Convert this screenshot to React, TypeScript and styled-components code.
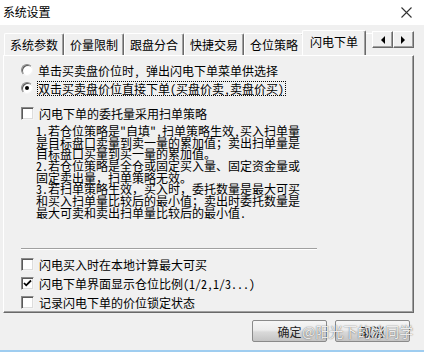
import React from "react";
import styled, { createGlobalStyle } from "styled-components";

const FONT = `"Noto Sans Mono CJK SC", "Noto Sans CJK SC", "Liberation Sans", sans-serif`;

const Global = createGlobalStyle`
  html, body { margin: 0; padding: 0; background: #f0f0f0; }
  body { width: 424px; height: 352px; overflow: hidden; font-family: ${FONT}; font-size: 12px; color: #000; }
  * { box-sizing: border-box; }
`;

const Window = styled.div`
  position: relative;
  width: 424px;
  height: 352px;
  display: flex;
  flex-direction: column;
  background: #f0f0f0;
  border-bottom: 2px solid #9fcdf0;
`;

const TitleBar = styled.div`
  height: 25px;
  flex: none;
  background: #ffffff;
  display: flex;
  align-items: center;
  justify-content: space-between;
  padding: 0 12px 1px 3px;
`;

const Title = styled.span`
  font-size: 12px;
  line-height: 12px;
  letter-spacing: -0.2px;
`;

const Body = styled.div`
  flex: 1;
  display: flex;
  flex-direction: column;
  padding: 0 10px 0 3px;
`;

const TabStrip = styled.div`
  width: 411px;
  height: 30px;
  display: flex;
  align-items: flex-end;
  position: relative;
  z-index: 1;
`;

const TabList = styled.div`
  flex: 1 1 0;
  min-width: 0;
  height: 30px;
  display: flex;
  align-items: flex-end;
  overflow: hidden;
  padding-left: 1px;
`;

const Tab = styled.div<{ $active?: boolean }>`
  flex: none;
  width: ${(p) => (p.$active ? 64 : 60)}px;
  height: ${(p) => (p.$active ? 26 : 22)}px;
  margin: 0 ${(p) => (p.$active ? -2 : 0)}px ${(p) => (p.$active ? -1 : 0)}px;
  position: relative;
  z-index: ${(p) => (p.$active ? 2 : 1)};
  display: flex;
  align-items: center;
  justify-content: center;
  padding-bottom: ${(p) => (p.$active ? 3 : 0)}px;
  background: #f0f0f0;
  border-top: 1px solid #ffffff;
  border-left: 1px solid #ffffff;
  border-right: 1px solid #696969;
  border-radius: 2px 2px 0 0;
  box-shadow: inset -1px 0 0 #a0a0a0;
  white-space: nowrap;
  font-size: 12px;
  line-height: 12px;
`;

const Spin = styled.div`
  flex: 0 0 42px;
  width: 42px;
  align-self: flex-start;
  margin-top: 6px;
  display: flex;
`;

const SpinButton = styled.div`
  flex: 0 0 21px;
  width: 21px;
  height: 17px;
  display: flex;
  align-items: center;
  justify-content: center;
  background: #f0f0f0;
  border-top: 1px solid #ffffff;
  border-left: 1px solid #ffffff;
  border-right: 1px solid #696969;
  border-bottom: 1px solid #696969;
  box-shadow: inset -1px -1px 0 #a0a0a0;
`;

const Panel = styled.div`
  width: 411px;
  height: 258px;
  flex: none;
  border-top: 1px solid #ffffff;
  border-left: 1px solid #ffffff;
  border-right: 1px solid #696969;
  border-bottom: 1px solid #696969;
  box-shadow: inset -1px -1px 0 #a0a0a0;
  padding: 5px 0 0 17px;
  display: flex;
  flex-direction: column;
`;

const OptionRow = styled.div<{ $h?: number; $mt?: number }>`
  height: ${(p) => p.$h ?? 18}px;
  margin-top: ${(p) => p.$mt ?? 0}px;
  display: flex;
  align-items: center;
  white-space: nowrap;
`;

const Radio = styled.span<{ $on?: boolean }>`
  flex: none;
  width: 12px;
  height: 12px;
  border-radius: 50%;
  background: #fff;
  border: 1px solid;
  border-color: #8a8a8a #f4f4f4 #f4f4f4 #8a8a8a;
  box-shadow: inset 1px 1px 0 #5a5a5a;
  display: flex;
  align-items: center;
  justify-content: center;
  &::after {
    content: "";
    width: 4px;
    height: 4px;
    border-radius: 50%;
    background: ${(p) => (p.$on ? "#000" : "transparent")};
  }
`;

const Check = styled.span`
  flex: none;
  width: 13px;
  height: 13px;
  background: #fff;
  border: 1px solid;
  border-color: #8a8a8a #f4f4f4 #f4f4f4 #8a8a8a;
  box-shadow: inset 1px 1px 0 #5a5a5a, inset -1px -1px 0 #dcdcdc;
  display: flex;
  align-items: center;
  justify-content: center;
`;

const Label = styled.span<{ $focus?: boolean }>`
  margin-left: ${(p) => (p.$focus ? 4 : 5)}px;
  padding: 0 1px 0 0;
  border: ${(p) => (p.$focus ? "1px dotted #000" : "none")};
  line-height: 13px;
  font-size: 12px;
`;

const Para = styled.div`
  margin: 3px 0 0 15px;
  font-size: 12px;
  line-height: 11.7px;
  white-space: nowrap;
`;

const ParaLine = styled.div`
  height: 11.7px;
`;

const Separator = styled.div`
  width: 296px;
  height: 2px;
  margin-top: 29.5px;
  border-top: 1px solid #a0a0a0;
  border-bottom: 1px solid #ffffff;
`;

const Footer = styled.div`
  margin-top: 7px;
  display: flex;
  justify-content: flex-end;
  gap: 8px;
  padding-right: 4px;
`;

const Button = styled.div`
  width: 75px;
  height: 22px;
  border: 1px solid #8a8a8a;
  border-radius: 2px;
  background: linear-gradient(#f6f6f6 0%, #ececec 45%, #d9d9d9 55%, #c4c4c4 100%);
  display: flex;
  align-items: center;
  justify-content: center;
  font-size: 12px;
  color: #222;
`;

const Watermark = styled.div`
  position: absolute;
  left: 302px;
  top: 322px;
  font-family: "Noto Sans CJK SC", sans-serif;
  font-size: 14px;
  line-height: 18px;
  color: rgba(255, 255, 255, 0.9);
  text-shadow: 0 0 1px rgba(0, 0, 0, 0.55), 0 0 2px rgba(0, 0, 0, 0.25);
  pointer-events: none;
  white-space: nowrap;
`;

const CloseIcon = () => (
  <svg width="11" height="11" viewBox="0 0 11 11">
    <path d="M0.5 0.5 L10.5 10.5 M10.5 0.5 L0.5 10.5" stroke="#333" strokeWidth="1.1" fill="none" />
  </svg>
);

const Arrow = ({ dir }: { dir: "left" | "right" }) => (
  <svg width="5" height="8" viewBox="0 0 5 8">
    {dir === "left" ? <path d="M5 0 L5 8 L1 4 Z" fill="#000" /> : <path d="M0 0 L0 8 L4 4 Z" fill="#000" />}
  </svg>
);

const CheckMark = () => (
  <svg width="9" height="9" viewBox="0 0 9 9">
    <path d="M1 4 L3.2 6.3 L8 1.5" stroke="#000" strokeWidth="1.8" fill="none" />
  </svg>
);

const tabs = ["系统参数", "价量限制", "跟盘分合", "快捷交易", "仓位策略", "闪电下单", "多帐号"];

const para = [
  '1.若仓位策略是"自填",扫单策略生效,买入扫单量',
  "是目标盘口卖量到卖一量的累加值；卖出扫单量是",
  "目标盘口买量到买一量的累加值。",
  "2.若仓位策略是全仓或固定买入量、固定资金量或",
  "固定卖出量，扫单策略无效。",
  "3.若扫单策略生效，买入时，委托数量是最大可买",
  "和买入扫单量比较后的最小值；卖出时委托数量是",
  "最大可卖和卖出扫单量比较后的最小值.",
];

export default function App() {
  return (
    <>
      <Global />
      <Window>
        <TitleBar>
          <Title>系统设置</Title>
          <CloseIcon />
        </TitleBar>
        <Body>
          <TabStrip>
            <TabList>
              {tabs.map((t) => (
                <Tab key={t} $active={t === "闪电下单"}>
                  {t}
                </Tab>
              ))}
            </TabList>
            <Spin>
              <SpinButton>
                <Arrow dir="left" />
              </SpinButton>
              <SpinButton>
                <Arrow dir="right" />
              </SpinButton>
            </Spin>
          </TabStrip>
          <Panel>
            <OptionRow>
              <Radio />
              <Label>单击买卖盘价位时, 弹出闪电下单菜单供选择</Label>
            </OptionRow>
            <OptionRow>
              <Radio $on />
              <Label $focus>双击买卖盘价位直接下单(买盘价卖,卖盘价买)</Label>
            </OptionRow>
            <OptionRow $mt={7}>
              <Check />
              <Label>闪电下单的委托量采用扫单策略</Label>
            </OptionRow>
            <Para>
              {para.map((l, i) => (
                <ParaLine key={i}>{l}</ParaLine>
              ))}
            </Para>
            <Separator />
            <OptionRow $h={19} $mt={4.5}>
              <Check />
              <Label>闪电买入时在本地计算最大可买</Label>
            </OptionRow>
            <OptionRow $h={19}>
              <Check>
                <CheckMark />
              </Check>
              <Label>闪电下单界面显示仓位比例(1/2,1/3...)</Label>
            </OptionRow>
            <OptionRow $h={19}>
              <Check />
              <Label>记录闪电下单的价位锁定状态</Label>
            </OptionRow>
          </Panel>
          <Footer>
            <Button>确定</Button>
            <Button>取消</Button>
          </Footer>
        </Body>
        <Watermark>@阳光下的冰同学</Watermark>
      </Window>
    </>
  );
}
